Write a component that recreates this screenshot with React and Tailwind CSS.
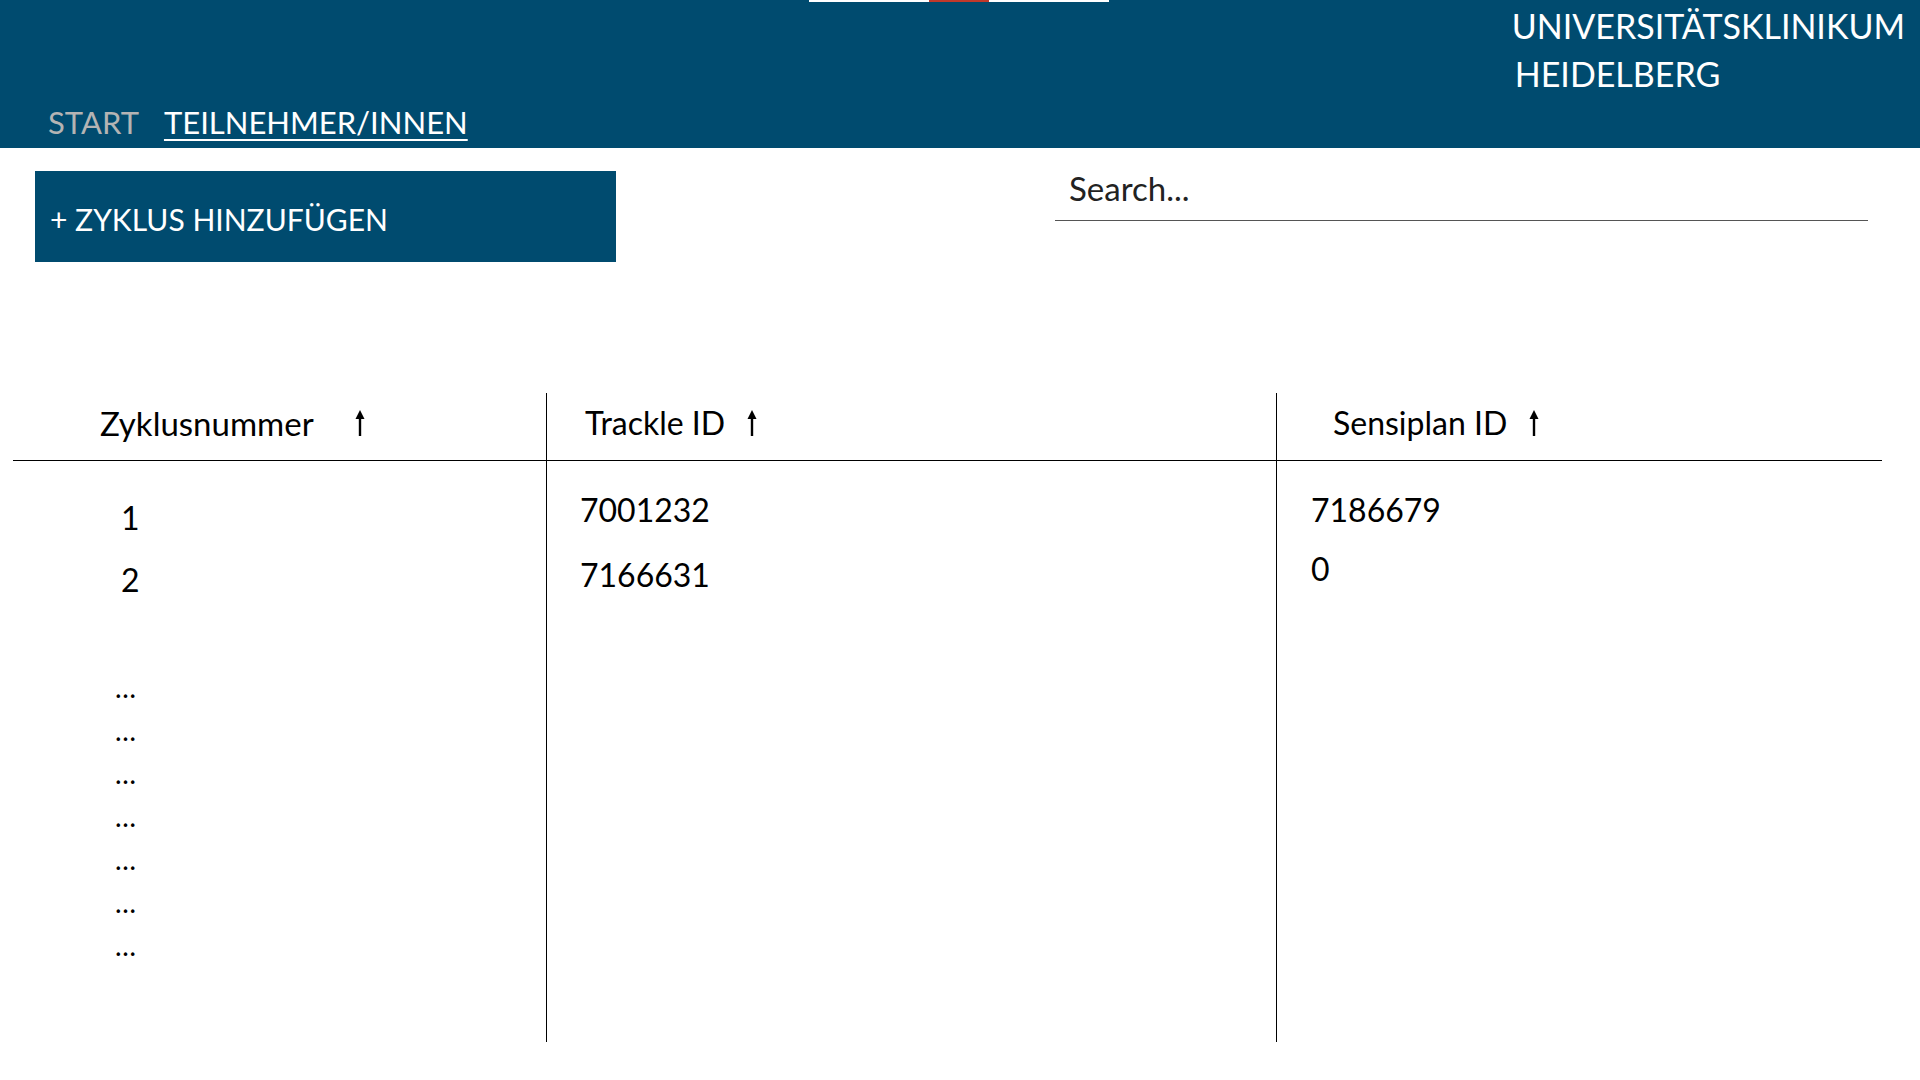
import { useState } from 'react';

const font = { fontFamily: 'Lato, "Open Sans", sans-serif' };

function SortArrow() {
  return (
    <svg width="12" height="28" viewBox="0 0 12 28" className="shrink-0">
      <line x1="6" y1="8" x2="6" y2="27" stroke="#000" strokeWidth="2.4" />
      <polygon points="6,1 1.5,10 10.5,10" fill="#000" />
    </svg>
  );
}

const zyklen = [
  { nr: '1', trackle: '7001232', sensiplan: '7186679' },
  { nr: '2', trackle: '7166631', sensiplan: '0' },
];

export default function App() {
  const [search, setSearch] = useState('');

  return (
    <div className="w-[1920px] h-[1080px] bg-white overflow-hidden" style={font}>
      {/* Kopfzeile */}
      <header className="relative h-[148px] bg-[#004b6f] flex justify-between">
        <div className="absolute top-0 left-[809px] flex h-[2px]">
          <div className="w-[120px] bg-white" />
          <div className="w-[60px] bg-[#c0392b]" />
          <div className="w-[120px] bg-white" />
        </div>

        <nav className="self-end pb-[6px] pl-[48px] flex gap-[25px] text-[31px] leading-[40px]">
          <a className="text-[#b4b4b4]">START</a>
          <a className="text-white underline underline-offset-[5px] decoration-[2px]">TEILNEHMER/INNEN</a>
        </nav>

        <div className="pt-[2px] pr-[15px] text-white text-[34px] leading-[48px]">
          <div>UNIVERSITÄTSKLINIKUM</div>
          <div className="ml-[3px]">HEIDELBERG</div>
        </div>
      </header>

      {/* Aktionen */}
      <div className="flex items-start">
        <button className="ml-[35px] mt-[23px] w-[581px] h-[91px] bg-[#004b6f] text-white text-[30px] leading-[40px] flex items-center pl-[15px] pt-[4px]">
          + ZYKLUS HINZUFÜGEN
        </button>
        <div className="ml-auto mr-[52px] mt-[20px] w-[813px] border-b border-[#555] pb-[12px]">
          <input
            value={search}
            onChange={(e) => setSearch(e.target.value)}
            placeholder="Search..."
            className="w-full pl-[14px] text-[33px] leading-[40px] h-[40px] outline-none placeholder:text-[#222] text-[#222]"
          />
        </div>
      </div>

      {/* Tabelle */}
      <div className="ml-[13px] mt-[131px] w-[1869px] grid grid-cols-[533px_730px_606px] text-black text-[32px] leading-[40px]">
        <div className="flex flex-col">
          <div className="h-[68px] border-b border-black flex items-center pl-[87px] pb-[7px] gap-[40px]">
            <span className="text-[33px]">Zyklusnummer</span>
            <SortArrow />
          </div>
          <div className="h-[581px] pl-[108px] pt-[37px]">
            {zyklen.map((z, i) => (
              <div key={z.nr} className={i === 0 ? '' : 'mt-[22px]'}>{z.nr}</div>
            ))}
            <div className="mt-[67px] flex flex-col gap-[3px] text-[28px] -ml-[6px]">
              {Array.from({ length: 7 }).map((_, i) => (
                <div key={i}>…</div>
              ))}
            </div>
          </div>
        </div>

        <div className="flex flex-col border-l border-black">
          <div className="h-[68px] border-b border-black flex items-center pl-[38px] pb-[7px] gap-[21px]">
            <span>Trackle ID</span>
            <SortArrow />
          </div>
          <div className="h-[581px] pl-[33px] pt-[29px]">
            {zyklen.map((z, i) => (
              <div key={z.nr} className={i === 0 ? '' : 'mt-[25px]'}>{z.trackle}</div>
            ))}
          </div>
        </div>

        <div className="flex flex-col border-l border-black">
          <div className="h-[68px] border-b border-black flex items-center pl-[56px] pb-[7px] gap-[21px]">
            <span>Sensiplan ID</span>
            <SortArrow />
          </div>
          <div className="h-[581px] pl-[34px] pt-[29px]">
            {zyklen.map((z, i) => (
              <div key={z.nr} className={i === 0 ? '' : 'mt-[19px]'}>{z.sensiplan}</div>
            ))}
          </div>
        </div>
      </div>
    </div>
  );
}
